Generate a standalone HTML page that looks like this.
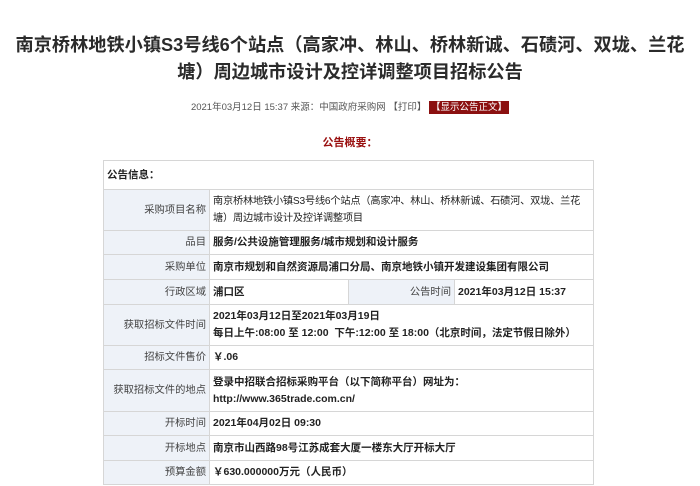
<!DOCTYPE html>
<html><head><meta charset="utf-8"><style>
body{margin:0;background:#fff;font-family:"Liberation Sans","Noto Sans CJK SC",sans-serif;color:#333;width:700px;height:486px;overflow:hidden;position:relative}
.t{position:absolute;left:0;width:700px;text-align:center;font-weight:bold;font-size:18.2px;line-height:27px;top:32px;color:#2b2b2b;white-space:nowrap}
.m{position:absolute;top:101px;left:0;width:700px;text-align:center;font-size:9.5px;color:#555;line-height:14px;white-space:nowrap}
.m b{background:#8b1010;color:#fff;font-weight:normal;padding:1px 2px}
.s{position:absolute;top:134px;left:0;width:700px;text-align:center;font-size:11px;font-weight:bold;color:#9a1010}
table{position:absolute;left:103px;top:160px;width:491px;border-collapse:collapse;font-size:10.5px;line-height:17px;table-layout:fixed}
td{border:1px solid #d6d6d6;padding:3px 3px;vertical-align:middle;white-space:nowrap;overflow:hidden}
td.l{background:#eef2f8;text-align:right;color:#444;font-size:10.3px}
td.v{font-weight:bold;color:#222}
</style></head><body>
<div class="t">南京桥林地铁小镇S3号线6个站点（高家冲、林山、桥林新诚、石碛河、双垅、兰花<br>塘）周边城市设计及控详调整项目招标公告</div>
<div class="m">2021年03月12日 15:37 来源：中国政府采购网 【打印】 <b>【显示公告正文】</b></div>
<div class="s">公告概要：</div>
<table>
<colgroup><col style="width:106px"><col style="width:139px"><col style="width:106px"><col></colgroup>
<tr style="height:29px"><td colspan="4" class="v">公告信息：</td></tr>
<tr style="height:41px"><td class="l">采购项目名称</td><td colspan="3" style="color:#222;font-size:10.2px;letter-spacing:-0.2px">南京桥林地铁小镇S3号线6个站点（高家冲、林山、桥林新诚、石碛河、双垅、兰花<br>塘）周边城市设计及控详调整项目</td></tr>
<tr style="height:24px"><td class="l">品目</td><td colspan="3" class="v">服务/公共设施管理服务/城市规划和设计服务</td></tr>
<tr style="height:25px"><td class="l">采购单位</td><td colspan="3" class="v">南京市规划和自然资源局浦口分局、南京地铁小镇开发建设集团有限公司</td></tr>
<tr style="height:25px"><td class="l">行政区域</td><td class="v">浦口区</td><td class="l">公告时间</td><td class="v">2021年03月12日 15:37</td></tr>
<tr style="height:41px"><td class="l">获取招标文件时间</td><td colspan="3" class="v">2021年03月12日至2021年03月19日<br>每日上午:08:00 至 12:00&nbsp; 下午:12:00 至 18:00（北京时间，法定节假日除外）</td></tr>
<tr style="height:24px"><td class="l">招标文件售价</td><td colspan="3" class="v">￥.06</td></tr>
<tr style="height:42px"><td class="l">获取招标文件的地点</td><td colspan="3" class="v">登录中招联合招标采购平台（以下简称平台）网址为：<br>http://www.365trade.com.cn/</td></tr>
<tr style="height:24px"><td class="l">开标时间</td><td colspan="3" class="v">2021年04月02日 09:30</td></tr>
<tr style="height:25px"><td class="l">开标地点</td><td colspan="3" class="v">南京市山西路98号江苏成套大厦一楼东大厅开标大厅</td></tr>
<tr style="height:24px"><td class="l">预算金额</td><td colspan="3" class="v">￥630.000000万元（人民币）</td></tr>
</table>
</body></html>
